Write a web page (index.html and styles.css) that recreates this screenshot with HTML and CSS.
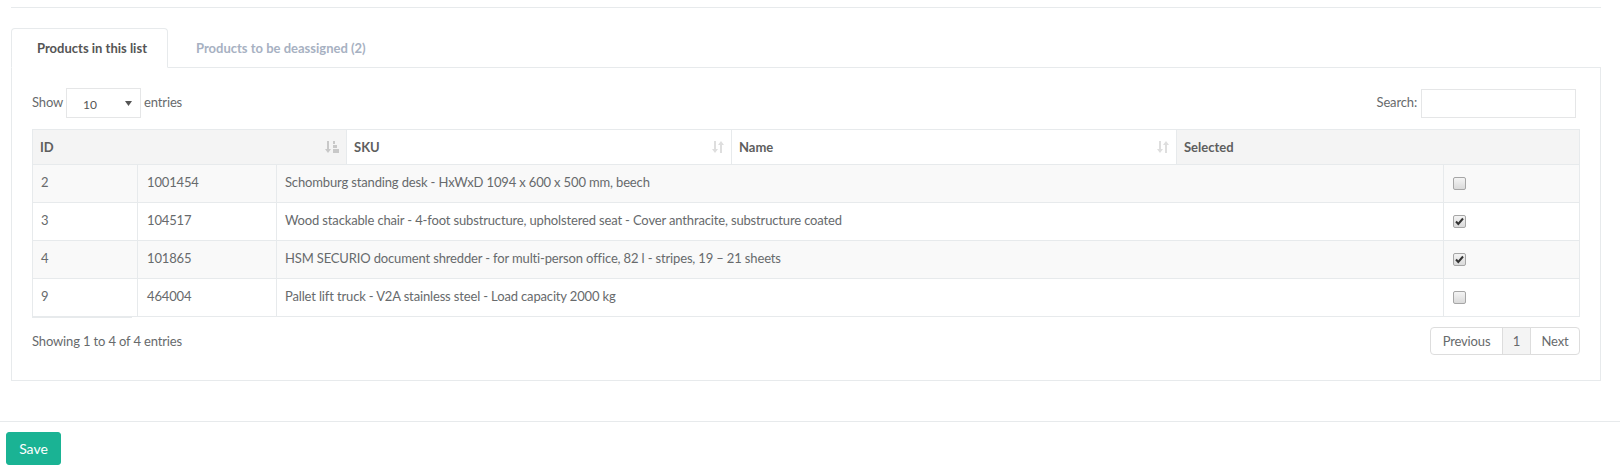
FILE: index.html
```html
<!DOCTYPE html>
<html lang="en">
<head>
<meta charset="utf-8">
<title>Products in this list</title>
<link rel="stylesheet" href="styles.css">
</head>
<body>
<div class="wrap">
  <div class="top-line"></div>
  <ul class="tabs">
    <li class="tab active">Products in this list</li>
    <li class="tab">Products to be deassigned (2)</li>
  </ul>
  <div class="panel">
    <div class="dt-top">
      <div class="dt-length">
        <span>Show</span>
        <div class="select">
          <span class="select-val">10</span>
          <svg class="select-arrow" width="7" height="5" viewBox="0 0 7 5"><polygon points="0,0 7,0 3.5,5" fill="#555"/></svg>
        </div>
        <span>entries</span>
      </div>
      <div class="dt-filter">
        <span>Search:</span>
        <div class="search-input"></div>
      </div>
    </div>

    <div class="dt-head">
      <div class="th sorted">ID
        <svg class="sort-ico" width="14" height="14" viewBox="0 0 14 14"><rect x="2" y="1" width="2" height="9" fill="#c8c8c8"/><polygon points="0,9 6,9 3,13" fill="#c8c8c8"/><rect x="8" y="1" width="2" height="3" fill="#c8c8c8"/><rect x="8" y="5" width="4" height="3" fill="#c8c8c8"/><rect x="8" y="9" width="6" height="4" fill="#c8c8c8"/></svg>
      </div>
      <div class="th">SKU
        <svg class="sort-ico" width="12" height="14" viewBox="0 0 12 14"><rect x="2" y="1" width="2" height="9" fill="#dedede"/><polygon points="0,9 6,9 3,13" fill="#dedede"/><rect x="8" y="4" width="2" height="9" fill="#dedede"/><polygon points="6,5 12,5 9,1" fill="#dedede"/></svg>
      </div>
      <div class="th">Name
        <svg class="sort-ico" width="12" height="14" viewBox="0 0 12 14"><rect x="2" y="1" width="2" height="9" fill="#dedede"/><polygon points="0,9 6,9 3,13" fill="#dedede"/><rect x="8" y="4" width="2" height="9" fill="#dedede"/><polygon points="6,5 12,5 9,1" fill="#dedede"/></svg>
      </div>
      <div class="th gray">Selected</div>
    </div>
    <div class="dt-body">
      <div class="tr odd">
        <div class="td">2</div><div class="td">1001454</div><div class="td">Schomburg standing desk - HxWxD 1094 x 600 x 500 mm, beech</div><div class="td"><span class="cb"></span></div>
      </div>
      <div class="tr">
        <div class="td">3</div><div class="td">104517</div><div class="td">Wood stackable chair - 4-foot substructure, upholstered seat - Cover anthracite, substructure coated</div><div class="td"><span class="cb"><svg width="11" height="11" viewBox="0 0 11 11"><path d="M2 5.5 L4.3 8 L9 2.5" fill="none" stroke="#333" stroke-width="2"/></svg></span></div>
      </div>
      <div class="tr odd">
        <div class="td">4</div><div class="td">101865</div><div class="td">HSM SECURIO document shredder - for multi-person office, 82 l - stripes, 19 – 21 sheets</div><div class="td"><span class="cb"><svg width="11" height="11" viewBox="0 0 11 11"><path d="M2 5.5 L4.3 8 L9 2.5" fill="none" stroke="#333" stroke-width="2"/></svg></span></div>
      </div>
      <div class="tr">
        <div class="td">9</div><div class="td">464004</div><div class="td">Pallet lift truck - V2A stainless steel - Load capacity 2000 kg</div><div class="td"><span class="cb"></span></div>
      </div>
    </div>
    <div class="scroll-foot"></div>

    <div class="dt-bottom">
      <div class="dt-info">Showing 1 to 4 of 4 entries</div>
      <div class="pager">
        <span class="pg prev">Previous</span><span class="pg cur">1</span><span class="pg next">Next</span>
      </div>
    </div>
  </div>
</div>
<div class="form-foot">
  <button class="btn-save" type="button">Save</button>
</div>
</body>
</html>
```

FILE: styles.css
```css
* { box-sizing: border-box; }
html, body { margin: 0; padding: 0; background: #fff; }
body {
  font-family: Lato, "Open Sans", "Liberation Sans", sans-serif;
  font-size: 13px;
  color: #676a6c;
  letter-spacing: -0.15px;
}
.wrap { padding: 7px 19px 0 11px; }
.top-line { border-top: 1px solid #e7eaec; }

.tabs {
  list-style: none;
  margin: 20px 0 0 0;
  padding: 0;
  display: flex;
  height: 39px;
}
.tab {
  height: 40px;
  margin-right: 2px;
  padding: 0 20px 0 25px;
  border: 1px solid transparent;
  border-radius: 4px 4px 0 0;
  display: flex;
  align-items: center;
  font-weight: 700;
  letter-spacing: 0;
  color: #a7b1c2;
  position: relative;
  z-index: 1;
}
.tab.active {
  background: #fff;
  color: #555;
  border-color: #e7eaec;
  border-bottom-color: #fff;
}

.panel {
  border: 1px solid #e7eaec;
  padding: 20px 20px 25px 20px;
}
.dt-top {
  display: flex;
  justify-content: space-between;
  align-items: center;
  height: 30px;
}
.dt-length { display: flex; align-items: center; padding-bottom: 2px; }
.select {
  width: 75px;
  height: 30px;
  margin: 2px 3px 0 3px;
  border: 1px solid #e5e6e7;
  display: flex;
  align-items: center;
  justify-content: space-between;
  padding: 3px 8px 0 16px;
}
.select-val { font-size: 12px; color: #555; }
.select-arrow { margin-top: -3px; }
.dt-filter { display: flex; align-items: center; margin-right: 4px; padding-bottom: 2px; }
.search-input {
  width: 155px;
  height: 29px;
  margin-left: 4px;
  margin-top: 2px;
  border: 1px solid #e5e6e7;
}

.dt-head {
  margin-top: 11px;
  display: grid;
  grid-template-columns: 314px 385px 445px 1fr;
  border: 1px solid #e7eaec;
  border-bottom: 0;
}
.th {
  height: 35px;
  border-bottom: 1px solid #e7eaec;
  border-right: 1px solid #e7eaec;
  padding: 0 7px 0 7px;
  display: flex;
  align-items: center;
  justify-content: space-between;
  font-weight: 700;
  letter-spacing: 0;
  color: #5e5e5e;
  background: #fff;
}
.th:last-child { border-right: 0; }
.th.sorted, .th.gray { background: #f4f4f4; }
.sort-ico { flex: none; }

.dt-body {
  border-left: 1px solid #e7eaec;
  border-right: 1px solid #e7eaec;
}
.tr {
  display: grid;
  grid-template-columns: 105px 139px 1167px 1fr;
  border-bottom: 1px solid #e7eaec;
  background: #fff;
}
.tr.odd { background: #f9f9f9; }
.td {
  height: 37px;
  padding: 0 8px 4px 8px;
  border-right: 1px solid #e7eaec;
  display: flex;
  align-items: center;
  white-space: nowrap;
}
.td:nth-child(2) { padding-left: 9px; }
.td:last-child { border-right: 0; padding: 0 8px 0 9px; }
.cb {
  width: 13px;
  height: 13px;
  border: 1px solid #a6a6a6;
  border-radius: 2px;
  background: linear-gradient(#f4f4f4, #dadada);
  display: flex;
  align-items: center;
  justify-content: center;
}
.cb svg { display: block; }
.scroll-foot {
  width: 100px;
  height: 1px;
  background: #e7eaec;
}

.dt-bottom {
  margin-top: 9px;
  display: flex;
  justify-content: space-between;
  align-items: center;
}
.dt-info { padding-bottom: 1px; }
.pager {
  display: flex;
  height: 28px;
}
.pg {
  height: 28px;
  display: flex;
  align-items: center;
  justify-content: center;
  border: 1px solid #dddddd;
  margin-left: -1px;
  padding-bottom: 1px;
  color: #676a6c;
  background: #fff;
}
.pg.prev { width: 73px; border-radius: 4px 0 0 4px; margin-left: 0; }
.pg.cur { width: 29px; background: #f4f4f4; }
.pg.next { width: 50px; border-radius: 0 4px 4px 0; }

.form-foot {
  margin-top: 40px;
  border-top: 1px solid #e7eaec;
  padding: 10px 6px 0 6px;
}
.btn-save {
  width: 55px;
  height: 33px;
  background: #1ab394;
  border: 1px solid #1ab394;
  border-radius: 3px;
  color: #fff;
  font-family: Lato, "Open Sans", "Liberation Sans", sans-serif;
  font-size: 14px;
  letter-spacing: 0;
  padding: 0;
}
```
